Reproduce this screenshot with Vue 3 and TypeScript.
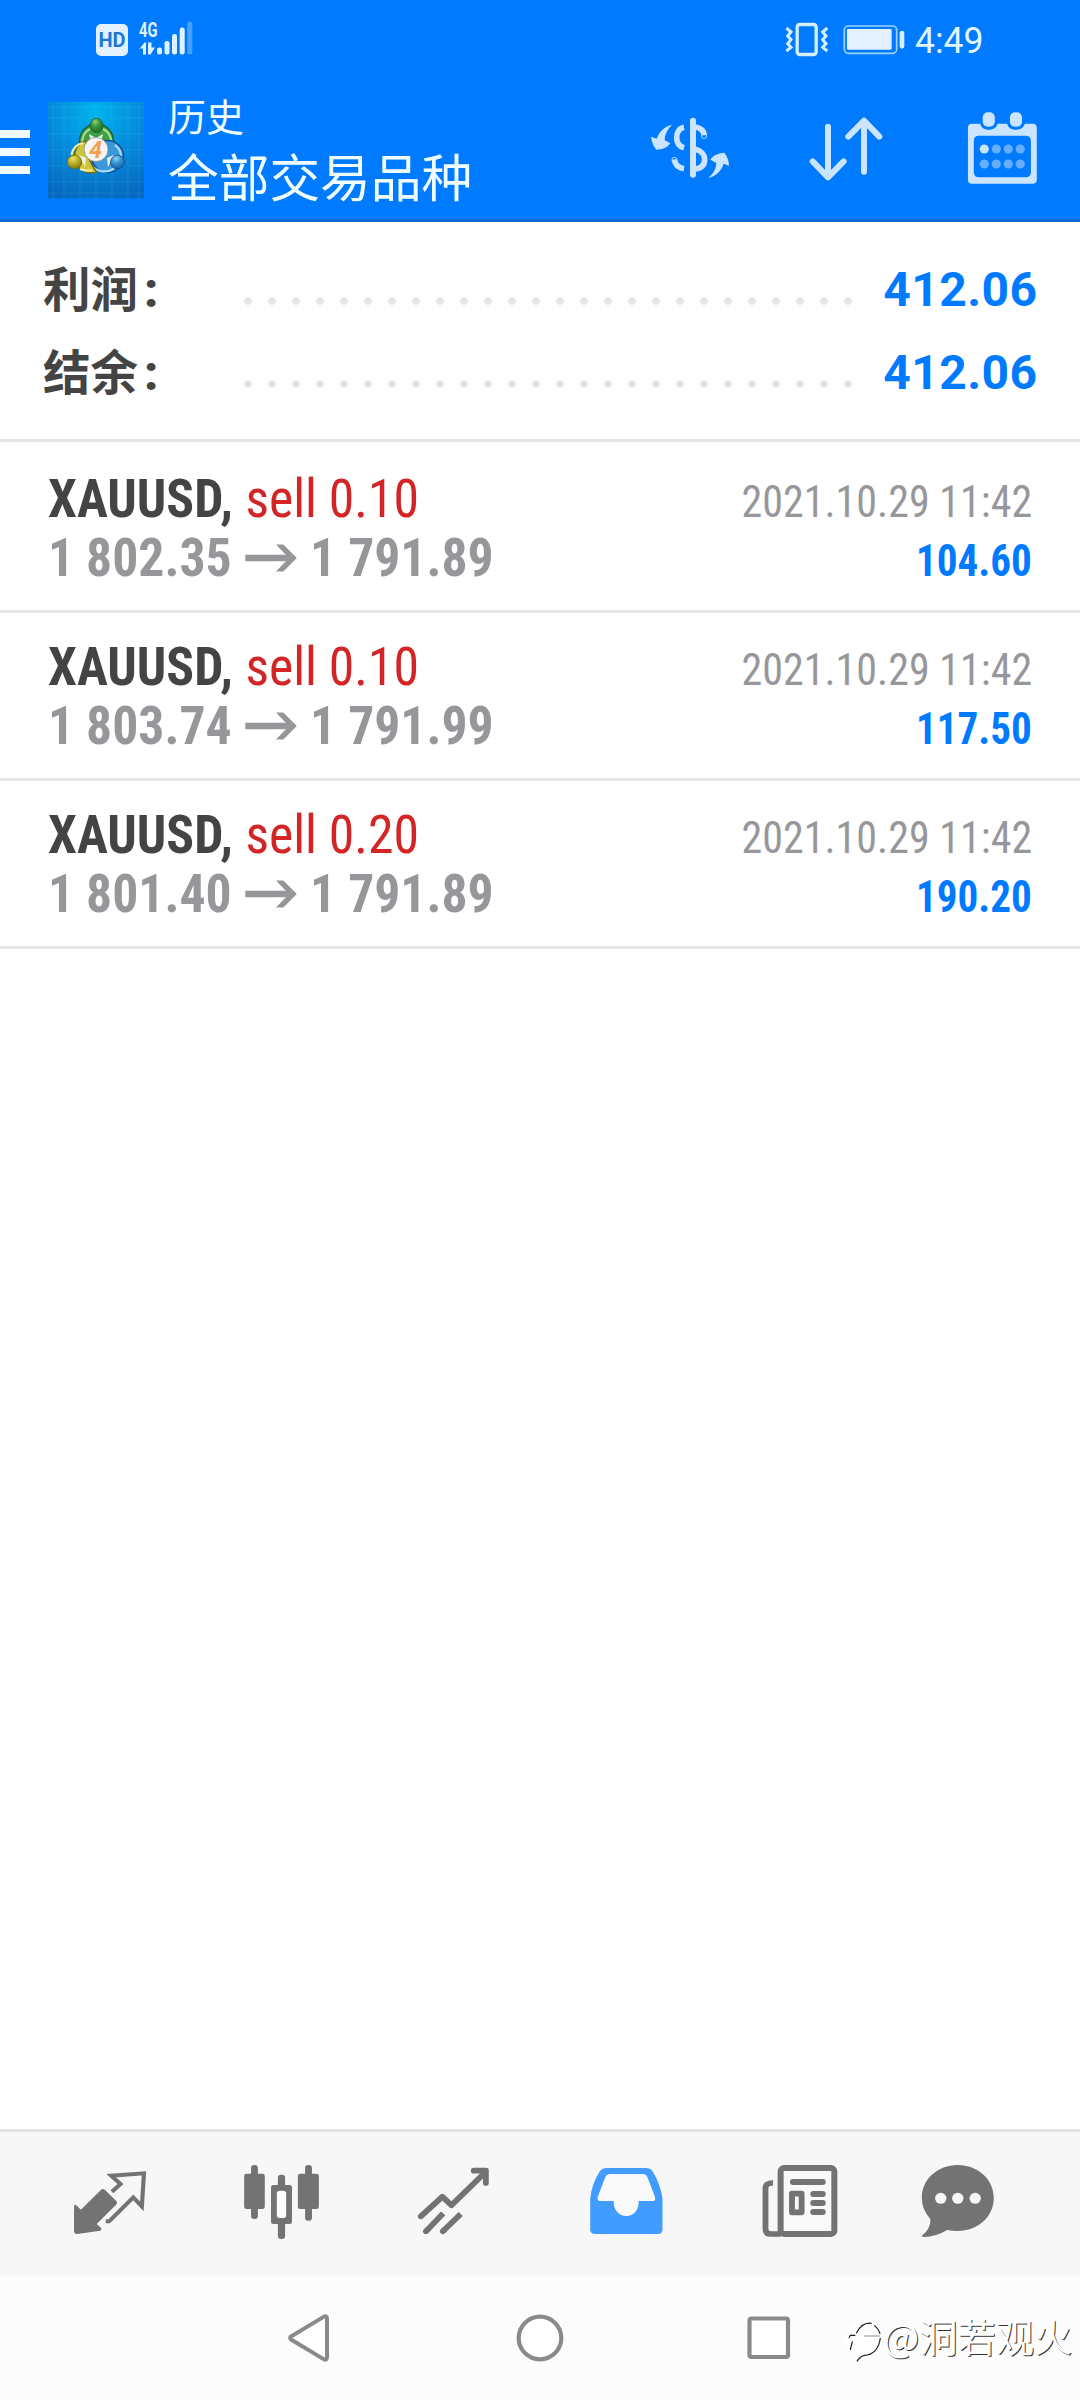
<script setup lang="ts">
interface Deal {
  symbol: string
  action: string
  open: string
  close: string
  time: string
  profit: string
}

interface Total {
  label: string
  value: string
}

const totals: Total[] = [
  { label: '利润', value: '412.06' },
  { label: '结余', value: '412.06' },
]

const deals: Deal[] = [
  { symbol: 'XAUUSD,', action: 'sell 0.10', open: '1 802.35', close: '1 791.89', time: '2021.10.29 11:42', profit: '104.60' },
  { symbol: 'XAUUSD,', action: 'sell 0.10', open: '1 803.74', close: '1 791.99', time: '2021.10.29 11:42', profit: '117.50' },
  { symbol: 'XAUUSD,', action: 'sell 0.20', open: '1 801.40', close: '1 791.89', time: '2021.10.29 11:42', profit: '190.20' },
]

const calendarDots = [0, 1, 2, 3]
const gridLines = [5, 16, 32, 48, 64, 80, 91]
</script>

<template>
  <div class="screen">
    <header class="top">
      <div class="status">
        <div class="hd">HD</div>
        <div class="network">
          <span class="gen">4G</span>
          <svg class="signal" width="56" height="36" viewBox="0 0 56 36">
            <g fill="#dff2ff">
              <path d="M0 28.500L5.500 21.500H7V33.500H4V27.500H0Z" />
              <path d="M9 21.500H12.500V26.500H16L11.500 33.500H9Z" />
              <rect x="18" y="26.500" width="5" height="7" rx="2.200" />
              <rect x="25.500" y="20" width="5" height="13.500" rx="2.200" />
              <rect x="33" y="13" width="5" height="20.500" rx="2.200" />
              <rect x="40.700" y="6.500" width="5" height="27" rx="2.200" />
            </g>
            <rect x="48.300" y="0.500" width="5" height="33" rx="2.200" fill="#47a0ff" />
          </svg>
        </div>
        <div class="status-right">
          <svg width="120" height="36" viewBox="436 21 360 108">
            <g fill="none" stroke="#d3f0ff">
              <rect x="472.500" y="28.500" width="57" height="90" rx="8" stroke-width="10" />
              <path d="M440 39L454 51L444 63L454 74L444 86L454 97L440 108" stroke-width="9" />
              <path d="M563 39L549 51L559 63L549 74L559 86L549 97L563 108" stroke-width="9" />
              <rect x="614" y="33" width="157" height="82" rx="12" stroke="#9bd2ff" stroke-width="5" />
            </g>
            <rect x="622" y="42" width="134" height="62" rx="4" fill="#e3f0ff" />
            <rect x="780" y="47" width="14" height="54" rx="7" fill="#d3f0ff" />
          </svg>
          <span class="clock">4:49</span>
        </div>
      </div>

      <div class="appbar">
        <div class="burger"><i></i><i></i><i></i></div>
        <svg class="logo" width="96" height="96" viewBox="0 0 96 96">
          <defs>
            <radialGradient id="sky" cx="0.5" cy="0.1" r="0.95">
              <stop offset="0" stop-color="#00b4ee" />
              <stop offset="0.5" stop-color="#058bdd" />
              <stop offset="1" stop-color="#0668bd" />
            </radialGradient>
            <radialGradient id="green" cx="0.4" cy="0.25" r="0.8">
              <stop offset="0" stop-color="#8fcf7c" />
              <stop offset="0.4" stop-color="#3f9a3c" />
              <stop offset="1" stop-color="#1b6a2a" />
            </radialGradient>
            <radialGradient id="gold" cx="0.4" cy="0.25" r="0.8">
              <stop offset="0" stop-color="#eee466" />
              <stop offset="0.4" stop-color="#c4b52c" />
              <stop offset="1" stop-color="#7d7412" />
            </radialGradient>
            <radialGradient id="azure" cx="0.4" cy="0.25" r="0.8">
              <stop offset="0" stop-color="#90d2f6" />
              <stop offset="0.4" stop-color="#3a96d8" />
              <stop offset="1" stop-color="#125fa5" />
            </radialGradient>
          </defs>
          <rect width="96" height="96" fill="url(#sky)" />
          <g stroke="#5cc4f5" stroke-opacity="0.22" stroke-width="0.8">
            <path v-for="n in gridLines" :key="n" :d="`M${n} 0V96M0 ${n}H96`" />
          </g>
          <circle cx="48.500" cy="39" r="17" fill="#3f9f45" stroke="#1d6033" stroke-width="1.400" />
          <path d="M34.500 41A14 14 0 0 1 42 27M55 27A14 14 0 0 1 62.500 44" fill="none" stroke="#a9dc95" stroke-width="2.200" />
          <circle cx="59.500" cy="54.500" r="16" fill="#3b98db" stroke="#0d4f8d" stroke-width="1.400" />
          <path d="M44 64A17 17 0 0 0 66 66.500M67 43A14 14 0 0 1 73 54" fill="none" stroke="#a5dbf8" stroke-width="2.200" />
          <path d="M48.500 70A16 16 0 1 1 38 38.500Q36 52 48.500 70Z" fill="#d2c638" stroke="#71701b" stroke-width="1.400" />
          <path d="M23.500 53A14 14 0 0 1 35 41M32 67Q38 69.500 44 68" fill="none" stroke="#f4ee9c" stroke-width="2.200" />
          <path d="M41 32L48 36L55 32L53 40H43ZM31 53L38 56L37 65ZM66 53L59 56L60 65Z" fill="#e9f5ee" />
          <ellipse cx="48.500" cy="23.500" rx="6.400" ry="7.200" fill="url(#green)" stroke="#1d6033" stroke-width="0.800" />
          <ellipse cx="26.500" cy="60" rx="7.200" ry="6.800" fill="url(#gold)" stroke="#71701b" stroke-width="0.800" />
          <ellipse cx="69.500" cy="60" rx="7" ry="6.800" fill="url(#azure)" stroke="#0d4f8d" stroke-width="0.800" />
          <circle cx="48" cy="47.500" r="12" fill="#f5f5f3" stroke="#8a8f83" stroke-width="0.800" />
          <text x="47.700" y="55.500" text-anchor="middle" font-family="Roboto, sans-serif" font-size="23" font-weight="700" font-style="italic" fill="#f5a050">4</text>
        </svg>
        <div class="titles">
          <div class="title-small">历史</div>
          <div class="title-main">全部交易品种</div>
        </div>
        <div class="actions">
          <svg width="80" height="80" viewBox="30 280 240 240" fill="#cbe4ff">
            <path d="M96 330C81 345 74 361 74 377L91 386C81 401 64 405 49 405C41 395 35 381 33 366L50 372C58 351 74 334 96 330Z" />
            <path d="M205 489C222 475 228 461 229 445L211 435C220 421 236 415 253 414C262 425 267 439 267 453L251 447C245 468 226 486 205 489Z" />
            <rect x="150" y="309" width="18" height="180" rx="9" />
            <g fill="none" stroke="#cbe4ff" stroke-width="17">
              <path d="M132 338C117 341 110 354 110 369C110 384 118 395 132 399" />
              <path d="M103 434C105 449 115 459 132 462" />
              <circle cx="103" cy="435" r="1" stroke-width="14" />
              <path d="M166 337C183 340 192 350 193 362" />
              <circle cx="192" cy="363" r="1" stroke-width="16" />
              <path d="M166 404C183 408 194 420 194 435C194 450 184 460 166 463" />
            </g>
          </svg>
          <svg width="80" height="80" viewBox="498 280 240 240" fill="none" stroke="#cbe4ff" stroke-width="18" stroke-linecap="round" stroke-linejoin="round">
            <path d="M564 336V488M518 440L564 488L611 440" />
            <path d="M672 471V318M625 366L672 318L718 366" />
          </svg>
          <svg class="calendar" width="80" height="80" viewBox="1220 325 232.300 240" preserveAspectRatio="none">
            <path fill="#cbe4ff" fill-rule="evenodd" d="M1255 372H1279C1281 383 1290 390 1303 390S1327 383 1329 372H1357C1359 383 1368 390 1382 390S1406 383 1408 372H1431Q1443 372 1443 384V540Q1443 552 1431 552H1255Q1243 552 1243 540V384Q1243 372 1255 372ZM1276 408Q1260 408 1260 424V517Q1260 533 1276 533H1410Q1426 533 1426 517V424Q1426 408 1410 408Z" />
            <rect x="1286" y="338" width="35" height="43" rx="15" fill="#cbe4ff" />
            <rect x="1365" y="338" width="35" height="43" rx="15" fill="#cbe4ff" />
            <g v-for="n in calendarDots" :key="n" fill="#66afff">
              <circle :cx="1290.500 + n * 34.800" cy="448" r="13.300" :fill="n === 0 ? '#cbe4ff' : '#66afff'" />
              <circle :cx="1290.500 + n * 34.800" cy="493" r="13.300" />
            </g>
          </svg>
        </div>
      </div>
    </header>

    <section class="summary">
      <div v-for="t in totals" :key="t.label" class="total">
        <span class="total-label">{{ t.label }}<b>:</b></span>
        <span class="leader"></span>
        <span class="total-value">{{ t.value }}</span>
      </div>
    </section>

    <main class="deals">
      <article v-for="(d, i) in deals" :key="i" class="deal">
        <div class="line">
          <div class="main-part">
            <span class="symbol">{{ d.symbol }}</span>
            <span class="action">{{ d.action }}</span>
          </div>
          <span class="time">{{ d.time }}</span>
        </div>
        <div class="line">
          <div class="main-part">
            <span class="price">{{ d.open }}</span>
            <svg class="arrow" width="54" height="28" viewBox="0 0 52 28" preserveAspectRatio="none">
              <path d="M0 14H48" stroke="#96979b" stroke-width="6.500" />
              <path d="M31 0.500H38.500L52 14L38.500 27.500H31L44 14Z" fill="#96979b" />
            </svg>
            <span class="price">{{ d.close }}</span>
          </div>
          <span class="profit">{{ d.profit }}</span>
        </div>
      </article>
    </main>

    <nav class="tabs">
      <svg class="tab" viewBox="69.700 66 499.500 432" preserveAspectRatio="none" fill="#737373">
        <path d="M215 288Q218 281 223 287L235 299L293 240Q299 234 305 240L337 272Q343 278 337 284L281 342L294 354Q296 360 291 362L224 372Q215 372 215 363Z" />
        <path fill="none" stroke="#737373" stroke-width="12" stroke-linejoin="miter" d="M325 245L350 222L323 197L418 190L412 289L387 262L317 334H307" />
      </svg>
      <svg class="tab" viewBox="569.200 66 499.500 432" preserveAspectRatio="none" fill="#737373">
        <rect x="709" y="191" width="60" height="106" rx="7" />
        <rect x="729" y="165" width="20" height="162" rx="9" />
        <rect x="865" y="191" width="61" height="106" rx="7" />
        <rect x="886" y="165" width="20" height="167" rx="9" />
        <rect x="807" y="194" width="21" height="50" rx="9" />
        <rect x="807" y="330" width="21" height="57" rx="9" />
        <rect x="787" y="225" width="61" height="117" rx="7" />
        <rect x="804" y="242" width="27" height="82" rx="8" fill="#fcfcfc" />
      </svg>
      <svg class="tab" viewBox="1068.700 66 499.500 432" preserveAspectRatio="none" fill="none" stroke="#737373" stroke-width="17" stroke-linecap="round" stroke-linejoin="round">
        <path d="M1222 319L1285 260L1311 286L1408 188M1376 182H1411V219" />
        <path d="M1237 364L1287 310M1286 364L1338 312" stroke-linecap="butt" />
        <path d="M1237 364L1240 361M1286 364L1289 361" />
      </svg>
      <svg class="tab" viewBox="0.200 66 499.500 432" preserveAspectRatio="none">
        <path fill="#429bff" d="M195 174H308Q320 174 327 184Q350 222 356 267V358Q356 372 343 372H160Q146 372 146 358V267Q150 222 174 184Q181 174 195 174Z" />
        <path fill="#f9f9f9" d="M204 192H298Q308 192 312 201L334 260Q337 273 328 273H287C287 302 272 318 251 318S214 302 214 273H175Q165 273 168 260L190 201Q194 192 204 192Z" />
      </svg>
      <svg class="tab" viewBox="499.700 66 499.500 432" preserveAspectRatio="none">
        <rect x="699" y="174" width="156" height="198" rx="10" fill="#f9f9f9" stroke="#737373" stroke-width="17.500" />
        <path fill="none" stroke="#737373" stroke-width="17" d="M677 219Q655 218 655 236V356Q655 372 670 372H700" />
        <rect x="726" y="207" width="104" height="18" rx="9" fill="#737373" />
        <rect x="732" y="251" width="28" height="56" fill="none" stroke="#737373" stroke-width="17" stroke-linejoin="round" />
        <path d="M794 252H821M794 279H821M794 306H821" stroke="#737373" stroke-width="18" stroke-linecap="round" />
      </svg>
      <svg class="tab" viewBox="999.200 66 499.500 432" preserveAspectRatio="none">
        <path fill="#737373" d="M1213 165C1272 165 1318 208 1318 264S1272 363 1213 363Q1198 363 1183 360Q1148 381 1116 381Q1106 380 1112 374Q1134 358 1134 328Q1109 298 1109 264C1109 208 1155 165 1213 165Z" />
        <g fill="#f7f7f7">
          <circle cx="1164" cy="265" r="16.500" />
          <circle cx="1213.500" cy="265" r="16.500" />
          <circle cx="1264" cy="265" r="16.500" />
        </g>
      </svg>
    </nav>

    <footer class="sysnav">
      <svg width="230" height="124" viewBox="0 0 230 124" fill="#fff" stroke="#8a8a8a" stroke-width="4" stroke-linejoin="round">
        <path d="M96 60.500L129 40.600Q132 39.500 132 43V81Q132 84.500 129 83.400L96 63.500Q94.500 62 96 60.500Z" />
      </svg>
      <svg width="230" height="124" viewBox="0 0 230 124">
        <circle cx="115" cy="62" r="21.300" fill="#fff" stroke="#8a8a8a" stroke-width="4.200" />
      </svg>
      <svg width="230" height="124" viewBox="0 0 230 124">
        <rect x="94.500" y="42.500" width="38.500" height="38.500" rx="2" fill="#fff" stroke="#8a8a8a" stroke-width="4.200" />
      </svg>
      <div class="watermark">
        <svg width="37" height="44" viewBox="0 0 111 132">
          <path d="M0 60C8 15 42 0 66 5C96 12 106 35 106 60C105 92 85 108 56 113L34 130L32 110C8 100 0 80 0 60Z" fill="#fff" />
          <path d="M34 46Q50 12 80 16M12 60L16 52H31M22 70L16 96M106 60C102 92 84 112 58 112Q46 114 36 130M88 22Q102 34 105 48" fill="none" stroke="#1c1c1c" stroke-width="3.500" />
          <path d="M57 54H105" stroke="#999" stroke-width="3.500" />
        </svg>
        <span class="handle">@洞若观火</span>
      </div>
    </footer>
  </div>
</template>

<style>
body {
  margin: 0;
}
</style>

<style scoped>
.screen {
  width: 1080px;
  height: 2400px;
  display: flex;
  flex-direction: column;
  background: #fff;
  overflow: hidden;
  font-family: Roboto, "Noto Sans CJK SC", sans-serif;
}
svg {
  display: block;
  flex: none;
}
.top {
  box-sizing: border-box;
  height: 222px;
  background: #007aff;
  border-bottom: 3px solid #0f6ad6;
}
.status {
  height: 80px;
  padding-left: 96px;
  padding-right: 96px;
  display: flex;
  align-items: flex-start;
}
.hd {
  width: 32px;
  height: 32px;
  margin-top: 24px;
  border-radius: 5px;
  background: #e2f1ff;
  color: #1b78d8;
  font: 700 20px/33px Roboto, sans-serif;
  text-align: center;
}
.network {
  display: grid;
  margin: 21px 0 0 11px;
}
.gen {
  grid-area: 1 / 1;
  font: 700 21px/18px Roboto, sans-serif;
  color: #dff2ff;
  transform: scaleX(0.7);
  transform-origin: left;
}
.signal {
  grid-area: 1 / 1;
}
.status-right {
  margin-left: auto;
  margin-top: 22px;
  display: flex;
}
.clock {
  width: 69px;
  margin-left: 10px;
  font: 400 37px/37px Roboto, sans-serif;
  color: #e0f6ff;
  transform: scaleX(0.96);
  transform-origin: left;
  white-space: nowrap;
}
.appbar {
  height: 139px;
  display: flex;
  align-items: flex-start;
}
.burger {
  width: 30px;
  margin-top: 50px;
  display: flex;
  flex-direction: column;
  gap: 10px;
}
.burger i {
  height: 8px;
  background: #f0faff;
}
.logo {
  margin: 22px 0 0 18px;
}
.titles {
  margin: 9px 0 0 24px;
  color: #f0fdff;
  font-family: "Noto Sans CJK SC", sans-serif;
}
.title-small {
  font-size: 38px;
  line-height: 52px;
}
.title-main {
  font-size: 50.700px;
  line-height: 68px;
}
.actions {
  margin-left: auto;
  margin-top: 28px;
  padding-right: 40px;
  display: flex;
  gap: 76px;
}
.calendar {
  margin-left: -2px;
}
.summary {
  box-sizing: border-box;
  height: 220px;
  padding: 26px 43px 0;
  border-bottom: 3px solid #e5e5e5;
}
.total {
  height: 83px;
  display: flex;
  align-items: center;
}
.total-label {
  width: 193px;
  margin-top: -6px;
  font: 700 47.500px/83px "Noto Sans CJK SC", sans-serif;
  color: #444;
  white-space: nowrap;
}
.total-label b {
  margin-left: 6px;
  font: 900 48px/1 Roboto, sans-serif;
}
.leader {
  width: 624px;
  height: 24px;
  margin-top: 23px;
  background: radial-gradient(circle at center, #e5e5e5 3.400px, transparent 4.200px) 0 0 / 24px 24px;
}
.total-value {
  margin-left: auto;
  margin-right: -0.400px;
  font-size: 48px;
  font-weight: 700;
  letter-spacing: 0.400px;
  color: #007aff;
}
.deals {
  flex: 1;
  padding-top: 3px;
}
.deal {
  box-sizing: border-box;
  height: 168px;
  padding: 24px 48px 0;
  border-bottom: 3px solid #e5e5e5;
  font-family: "Roboto Condensed", Roboto, sans-serif;
  font-stretch: 75%;
}
.line {
  height: 59px;
  line-height: 59px;
  display: flex;
  align-items: baseline;
  justify-content: space-between;
  white-space: nowrap;
}
.main-part {
  display: flex;
  align-items: baseline;
  transform: scaleX(0.957);
  transform-origin: left;
}
.symbol {
  font-size: 54px;
  font-weight: 700;
  color: #444;
}
.action {
  margin-left: 13px;
  font-size: 54px;
  color: #d32426;
}
.price {
  font-size: 54px;
  font-weight: 700;
  color: #96979b;
}
.arrow {
  align-self: center;
  margin: 0 14px;
}
.time {
  font-size: 45px;
  color: #96979b;
  transform: scaleX(0.934);
  transform-origin: right;
}
.profit {
  font-size: 45px;
  font-weight: 700;
  color: #007aff;
  transform: scaleX(0.913);
  transform-origin: right;
}
.tabs {
  box-sizing: border-box;
  height: 147px;
  padding-left: 24px;
  display: flex;
  background: #f7f7f7;
  border-top: 3px solid #e5e5e5;
}
.tab {
  width: 172px;
  height: 144px;
}
.sysnav {
  position: relative;
  height: 124px;
  padding-left: 195px;
  display: flex;
  background: #fcfcfc;
}
.watermark {
  position: absolute;
  left: 845px;
  top: 42px;
  display: flex;
}
.handle {
  margin: -4px 0 0 1px;
  font: 400 38.300px/44px "Noto Sans CJK SC", sans-serif;
  color: #fff;
  text-shadow: 1px 1px 0.500px #333;
  white-space: nowrap;
}
</style>
